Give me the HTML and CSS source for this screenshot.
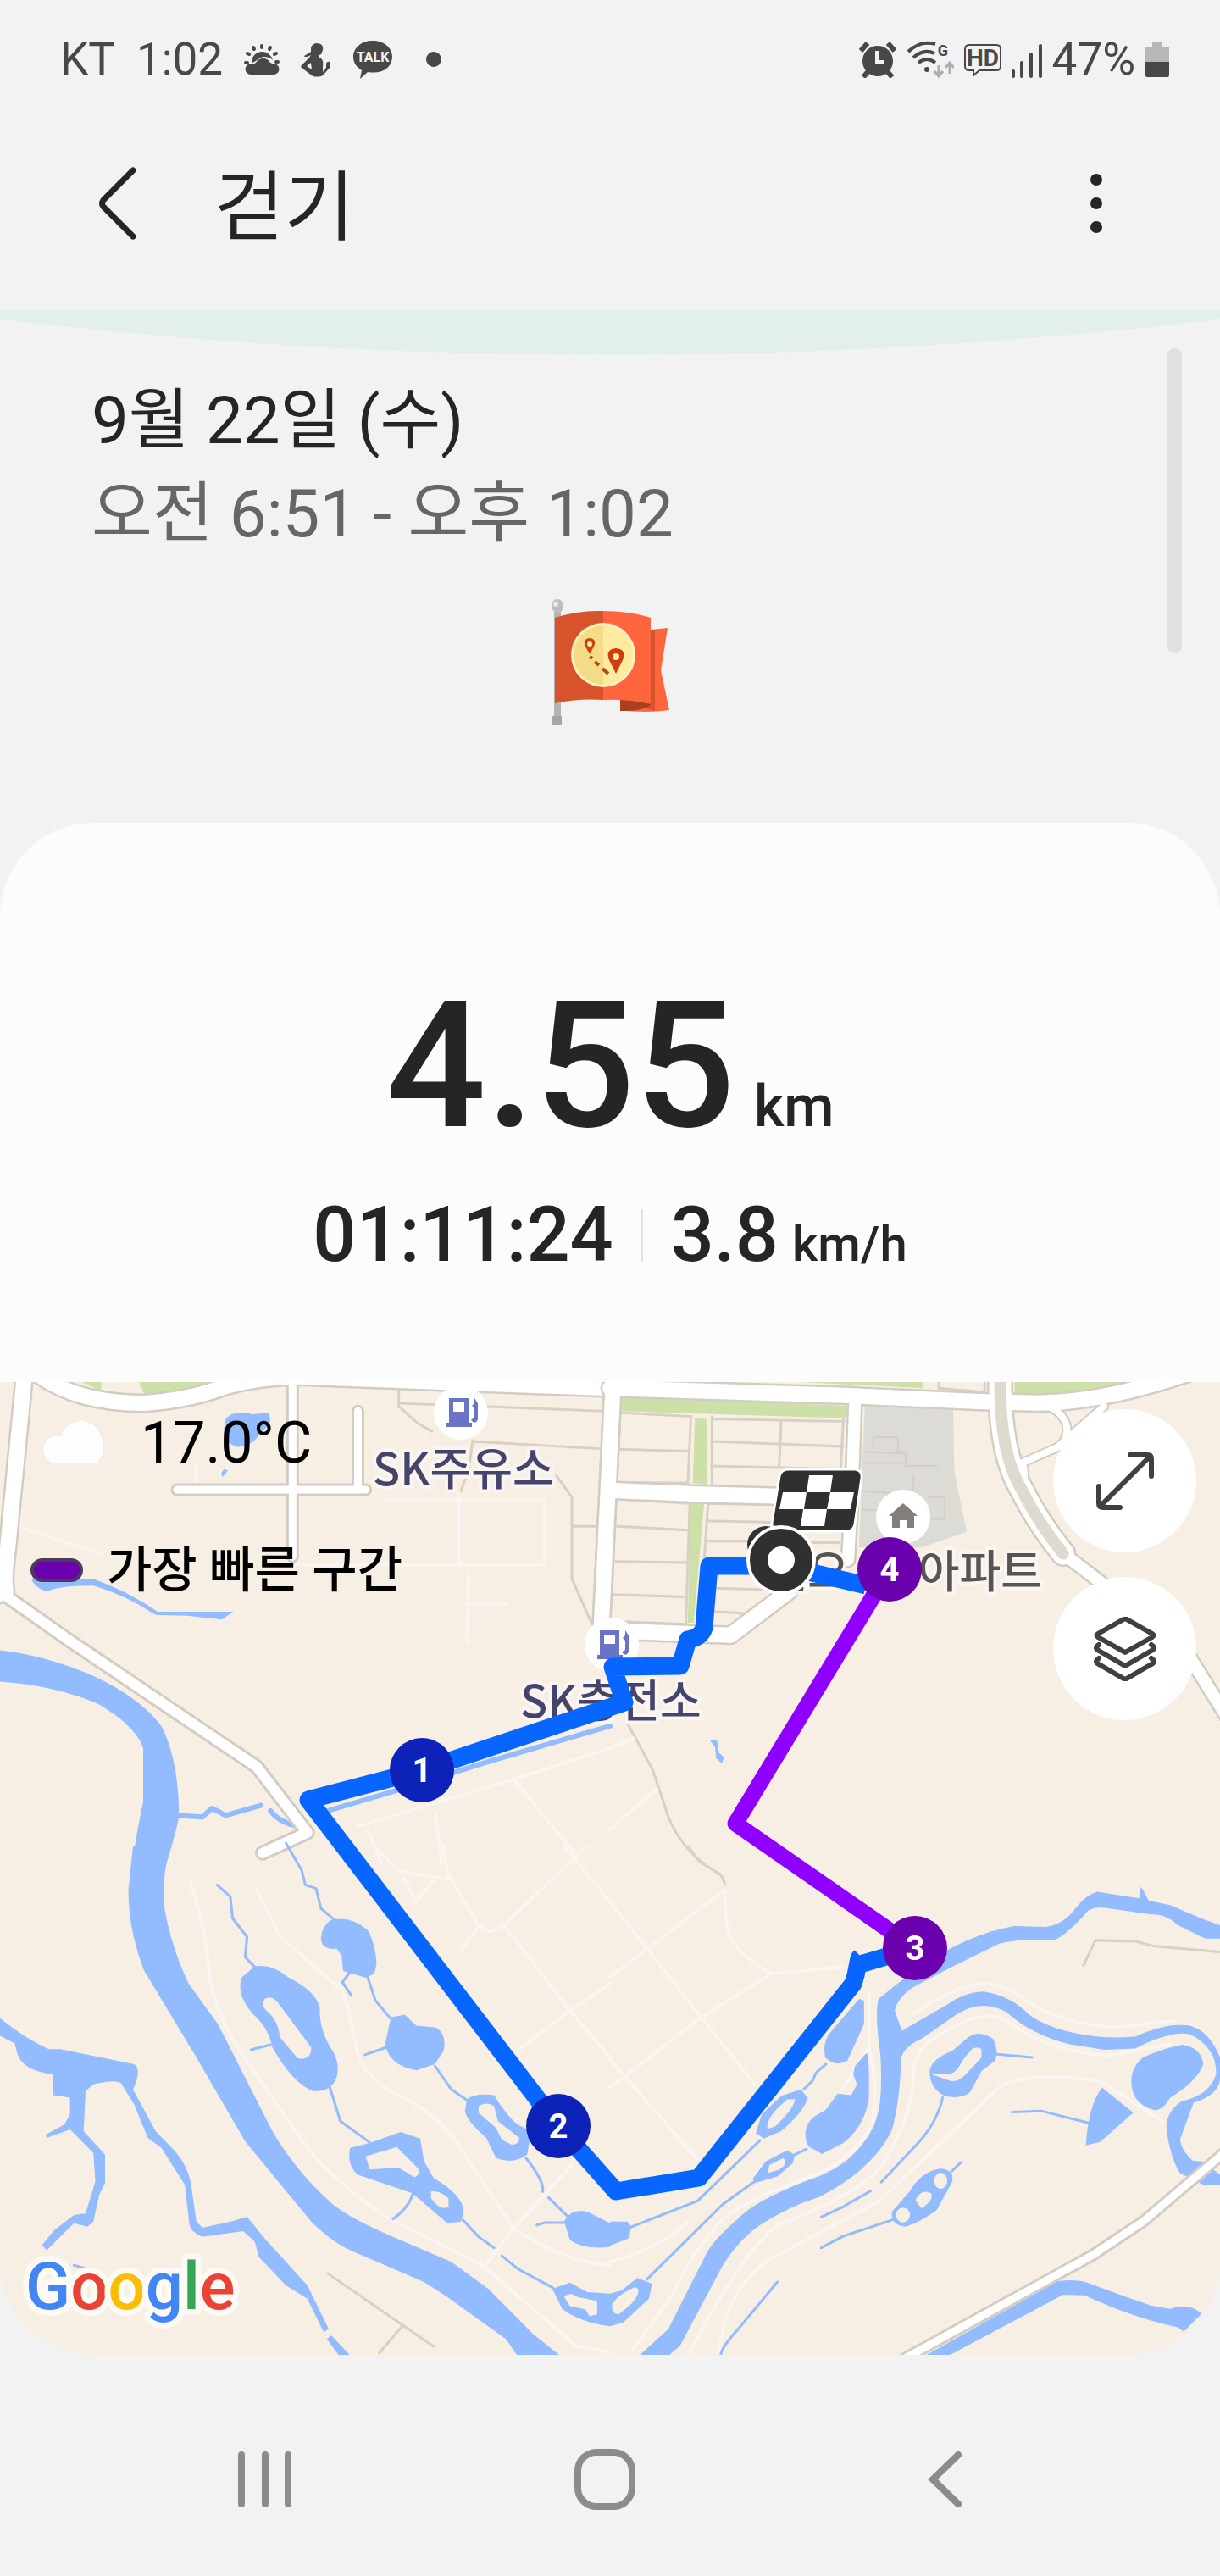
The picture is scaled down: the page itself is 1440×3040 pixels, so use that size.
FILE: index.html
```html
<!doctype html>
<html lang="ko">
    <head>
        <meta charset="utf-8">
        <meta name="viewport" content="width=device-width, initial-scale=1">
        <title>걷기</title>
        <link rel="stylesheet" href="styles.css">
    </head>
    <body>
        <div class="statusbar">
            <div class="status-left">
                <span>KT</span>
                <span>1:02</span>
                <svg class="status-icon" width="42" height="44" viewBox="0 0 42 44">
                    <g stroke="#484848" stroke-width="4" stroke-linecap="round">
                        <path d="M21 6v2M11 8l1 2M31 8l-1 2M4 15l2 1M38 15l-2 1M2 26h2M38 25h2" />
                    </g>
                    <path d="M9 26c0-8 6-13 12-13 7 0 12 5 13 10-3-3-7-4-10-4-6 0-9 6-15 7z" />
                    <path d="M8 40a6 6 0 0 1 0-13c3 0 5 0 6-1 4-7 14-6 17 0 2 1 3 1 4 1a6 6 0 0 1 0 13z" />
                </svg>
                <svg class="status-icon" width="36" height="44" viewBox="0 0 36 44">
                    <path d="M19 3c6 0 8 4 7 8l-2 5-2 1v3c4 1 5 6 4 11v6l4-5v-5c1-3 5-3 5 0v4L26 41c-4 2-10 2-13 0L1 32c-1-1-1-2 0-3l9-9 2-3C7 20 4 19 4 18l8-5V8c1-3 4-5 7-5zM7 30l6 4-1-8z" />
                </svg>
                <svg class="status-icon talk" width="48" height="50" viewBox="0 0 48 50">
                    <path d="M24 3C11 3 1 11 1 22c0 8 5 13 10 16L9 48l9-8c18 3 29-6 29-18C47 11 37 3 24 3z" />
                    <text x="24" y="28">TALK</text>
                </svg>
                <i class="more-dot"></i>
            </div>
            <div class="status-right">
                <svg class="status-icon" width="44" height="44" viewBox="0 0 44 44">
                    <circle cx="22" cy="24" r="18" />
                    <path d="M2 12L10 3M42 12L34 3" stroke="#484848" stroke-width="6" />
                    <path d="M5 43l6-7M39 43l-6-7" stroke="#484848" stroke-width="6" />
                    <path d="M21 12v13h9" fill="none" stroke="#f2f2f2" stroke-width="4" />
                </svg>
                <svg class="status-icon wifi" width="56" height="46" viewBox="0 0 56 46">
                    <g fill="none" stroke="#484848" stroke-width="4">
                        <path d="M2 14Q16 0 34 5M8 21Q20 10 33 16M14 27Q24 19 34 27" />
                    </g>
                    <circle cx="24" cy="35" r="3" />
                    <path d="M38 30v12m-5-5l5 6 5-6M51 40V28m-5 5l5-6 5 6" fill="none" stroke="#adadad" stroke-width="3" />
                    <text x="43" y="19">G</text>
                </svg>
                <svg class="status-icon hd" width="44" height="44" viewBox="0 0 44 44">
                    <path d="M6 5h32q5 0 5 5v20q0 5-5 5H18l-7 6v-6H6q-5 0-5-5V10q0-5 5-5z" fill="none" stroke="#484848" stroke-width="2" />
                    <text x="22" y="30">HD</text>
                </svg>
                <svg class="status-icon" width="36" height="44" viewBox="0 0 36 44">
                    <path d="M2 36v6M12 26v16M23 16v26M34 6v36" stroke="#484848" stroke-width="4" stroke-linecap="round" />
                </svg>
                <span>47%</span>
                <svg class="status-icon" width="28" height="44" viewBox="0 0 28 44">
                    <path d="M8 1h12v6h8v18H0V7h8z" fill="#b8b8b8" />
                    <path d="M0 25h28v16q0 2-2 2H2q-2 0-2-2z" />
                </svg>
            </div>
        </div>

        <header class="header">
            <button class="icon-button" aria-label="뒤로">
                <svg width="48" height="88" viewBox="0 0 48 88">
                    <path d="M42 5L7 40q-3 4 0 8l35 35" fill="none" stroke="#252525" stroke-width="7" stroke-linecap="round" />
                </svg>
            </button>
            <h1>걷기</h1>
            <button class="icon-button" aria-label="더보기">
                <svg width="48" height="88" viewBox="0 0 48 88" fill="#252525">
                    <circle cx="24" cy="16" r="7" />
                    <circle cx="24" cy="44" r="7" />
                    <circle cx="24" cy="72" r="7" />
                </svg>
            </button>
        </header>

        <main>
            <section class="summary">
                <svg class="arc" viewBox="0 0 1440 54" preserveAspectRatio="none">
                    <path d="M0 0H1440V11Q720 95 0 11z" fill="#e3f0e9" />
                </svg>
                <div class="scrollbar"></div>
                <p class="date">9월 22일 (수)</p>
                <p class="time">오전 6:51 - 오후 1:02</p>
                <svg class="flag" width="140" height="148" viewBox="0 0 140 148">
                    <path d="M4 12h8v130H4z" fill="#b3b3b3" />
                    <path d="M2 138h11v10H2z" fill="#a6a6a6" />
                    <ellipse cx="8" cy="8" rx="7" ry="8" fill="#bdbdbd" />
                    <circle cx="6" cy="6" r="3" fill="#e8e8e8" />
                    <path d="M82 120q18 12 36 2l1-86 19-2-8 50 10 47q-28 4-58 0z" fill="#ff653c" />
                    <path d="M118 36h5v96l-10-3z" fill="#d8532b" />
                    <path d="M82 117h36v8q-12 8-36 7z" fill="#a83f1e" />
                    <path d="M5 22q28-9 57-8v105q-30-2-57 4z" fill="#d8532b" />
                    <path d="M62 14q30 0 56 8v102q-26-6-56-5z" fill="#ff653c" />
                    <circle cx="62" cy="66" r="38" fill="#fff1c4" />
                    <path d="M62 31a35 35 0 0 0 0 70z" fill="#f3dc85" />
                    <path d="M62 31a35 35 0 0 1 0 70z" fill="#fdeba0" />
                    <path d="M46 65l-5-9q-4-9 5-10 9 1 5 10zM77 88l-8-16q-5-13 8-14 13 1 8 14z" fill="#cf3d10" />
                    <circle cx="46" cy="53" r="3" fill="#fdeba0" />
                    <circle cx="77" cy="68" r="4" fill="#fdeba0" />
                    <path d="M46 68l3 2M52 74l5 4M61 82l7 6" stroke="#b5451c" stroke-width="4" />
                </svg>
            </section>

            <section class="result">
                <p class="distance"><span>4.55</span><small>km</small></p>
                <div class="pace">
                    <span>01:11:24</span>
                    <i class="divider"></i>
                    <span class="speed"><span>3.8</span><small>km/h</small></span>
                </div>
            </section>

            <section class="map">
                <svg class="map-image" viewBox="0 0 1440 1148">
                    <g class="tile" transform="translate(0 -12) scale(.4592 .3699)">
                        <path class="park" d="M200 25H260V62zM355 25H560Q460 70 370 70z" />
                        <path class="trail" d="M1180 400V620M990 410H1400V615H760M1205 640L1200 860M60 500L260 580M920 1450L1320 1300L1568 1200M1320 1300L1480 1540M945 1460L980 1568M1120 1410L1135 1568M505 290V370M60 330L50 500M560 390H740V480M1200 740H1300" />
                        <path class="lane" d="M1025 50V110L1070 160L1110 190M1030 100L1545 125M1215 222L1540 245M1430 330L1470 400V660L1520 800M1475 493H1530M1215 220L1205 310L1185 380" />
                        <path class="water" d="M580 150Q600 120 650 135L690 130Q705 170 670 190Q655 235 610 240Q575 225 575 190zM568 325l8-15 10 5-14 20zM80 660L240 660Q330 700 405 765L500 765L600 765L570 790L480 778L400 775Q320 710 240 682Q160 680 120 700Q90 690 80 660z" />
                        <path class="water" d="M0 888Q120 905 240 970Q360 1040 415 1130Q460 1240 460 1420Q450 1480 425 1580H338Q350 1480 368 1370L368 1200Q350 1130 250 1058Q140 1000 0 988z" />
                        <path class="stream wide" d="M455 1415L520 1420L545 1392L580 1415L670 1383M695 1400Q720 1440 770 1450M815 1410L1020 1335L1250 1245L1568 1130" />
                        <g class="casing">
                            <path class="w18" d="M62 20L20 560Q8 660 15 700L-20 720" />
                            <path class="w12" d="M10 710L170 850L660 1260L790 1470L675 1535" />
                            <path class="w18" d="M100 10Q200 100 370 100Q480 90 560 55Q640 20 760 15L1568 52" />
                            <path class="w10" d="M752 20V590M455 376H940M920 125V376" />
                            <path class="w18" d="M1575 60L1562 400L1545 830" />
                        </g>
                        <g class="road">
                            <path class="w18" d="M62 20L20 560Q8 660 15 700L-20 720" />
                            <path class="w12" d="M10 710L170 850L660 1260L790 1470L675 1535" />
                            <path class="w18" d="M100 10Q200 100 370 100Q480 90 560 55Q640 20 760 15L1568 52" />
                            <path class="w10" d="M752 20V590M455 376H940M920 125V376" />
                            <path class="w18" d="M1575 60L1562 400L1545 830" />
                        </g>
                    </g>
                    <g class="tile" transform="translate(720 -12) scale(.4592 .3699)">
                        <path class="park" d="M22 75L606 108V148L22 125zM218 148L250 150L248 360L213 355zM207 418H242L215 800H200zM370 25H806V52zM1040 25H1350Q1240 75 1130 72L1040 70z" />
                        <path class="estate" d="M655 105L882 122L885 320L917 510L800 560L640 560z" />
                        <path class="lane" d="M22 130L208 142L200 355L12 352M22 247L205 253M262 142V360M600 150L590 372M262 150L600 158M260 222L600 238M440 155L435 300M260 300L600 310M12 405L205 420L195 805L0 795M10 492L200 505M5 605L198 608M0 710L195 718M252 420L420 424M250 475L420 480M248 540H360M275 690L400 695M272 765L340 770M252 420L240 640M500 545H590M845 25V52L963 65V25M40 1110L110 1270L150 1420Q180 1510 240 1568" />
                        <path class="lane faded" d="M675 245L680 208H740V255H760V300H840M655 255L755 260M650 290H760M780 330V380M820 400H860V470H820M650 380L760 390M650 440H720" />
                        <path class="trail" d="M0 1460L120 1330M0 1200L60 1170" />
                        <path class="water" d="M257 1175h18l5 40 14 15-7 18-14-15-3-35z" />
                        <g class="casing">
                            <path class="w18" d="M7 60L-6 400L-23 830M30 827L310 840L460 700" />
                            <path class="w18" d="M0 52L600 75L960 95L1060 98Q1250 110 1520 -10M0 378L230 390L600 402" />
                            <path class="w14" d="M630 90L622 380L612 600M1170 585Q1230 640 1290 700L1480 890L1590 1110" />
                            <path class="w8" d="M1130 110Q1200 160 1160 235L1060 290Q1070 340 1060 340M1150 240L1270 110" />
                            <path class="w26" d="M1003 20Q1000 260 1060 380Q1100 480 1165 580" />
                        </g>
                        <g class="road">
                            <path class="w18" d="M7 60L-6 400L-23 830M30 827L310 840L460 700" />
                            <path class="w18" d="M0 52L600 75L960 95L1060 98Q1250 110 1520 -10M0 378L230 390L600 402" />
                            <path class="w14" d="M630 90L622 380L612 600M1170 585Q1230 640 1290 700L1480 890L1590 1110" />
                            <path class="w8" d="M1130 110Q1200 160 1160 235L1060 290Q1070 340 1060 340M1150 240L1270 110" />
                            <path class="w26" d="M1003 20Q1000 260 1060 380Q1100 480 1165 580" />
                        </g>
                        <path class="highway" d="M1003 20Q1000 260 1060 380Q1100 480 1165 580" />
                    </g>
                    <g class="tile" transform="translate(0 548) scale(.4592 .3954)">
                        <path class="trail" d="M490 110Q530 250 540 400Q560 520 640 650L760 850Q830 980 1000 1110L1240 1250L1480 1490L1568 1510M660 130L720 270L880 430Q900 500 920 620Q940 700 1040 750Q1150 820 1200 930L1320 1140Q1450 1240 1568 1250M1240 1260L1320 1140L1470 950M960 0L1030 75L1155 98M1030 75L1068 165L1115 100M1140 0L1150 80L1230 235L1260 255L1295 235L1475 35L1510 0M1450 0L1568 165M1295 235L1465 490L1568 630M1465 490L1330 610M1465 490L1568 410M1230 240L1185 310" />
                        <path class="lane" d="M843 1275L1115 1493M1035 1430L975 1512" />
                        <path class="water" d="M342 0H437Q415 100 422 180Q440 300 485 410L560 530L700 850Q760 970 855 1068Q900 1110 1000 1160L1160 1240L1255 1320L1370 1455L1440 1520H1330L1300 1470L1150 1345L1090 1300L920 1215Q860 1190 800 1120L630 880L500 620L370 370Q330 250 330 130z" />
                        <path class="water" d="M0 512Q60 570 125 605L155 605L345 650Q365 665 342 725L400 850L450 910Q480 950 490 1000L505 1120L520 1138L600 1118L635 1105L680 1170L790 1310L845 1440L832 1450L790 1350L735 1310L665 1225L655 1180L625 1148L520 1165Q490 1150 487 1130L475 1010L415 900L380 870L345 770L310 705Q290 695 240 710L220 730L215 850L270 920V1005L255 1040L240 1120L225 1135L190 1125L120 1205L108 1190L140 1145L190 1100L220 1095L245 1000L240 915L180 845L120 870L118 860L165 830L180 800V750L137 742V680Q60 670 45 620L38 588L0 565zM852 1460L905 1525H875L840 1470z" />
                        <path class="water" d="M850 220Q900 205 945 250Q965 290 968 350L962 380L940 392L882 372L878 325L865 305Q830 310 825 280Q825 240 850 220zM655 358Q700 350 740 390Q810 430 822 480Q820 550 855 610Q875 650 865 690Q850 735 805 730Q755 710 700 600Q690 540 650 500Q605 440 622 390zM680 455Q700 440 720 475L800 600Q800 640 765 632L720 570Q715 520 690 495Q670 480 680 455z" />
                        <path class="water" d="M1005 510L1040 502L1070 535L1120 540Q1150 560 1140 610L1118 650L1070 668Q1000 655 990 590zM1200 755Q1220 735 1270 742Q1300 800 1330 830L1365 850L1355 920Q1320 950 1275 930L1250 870Q1200 820 1195 790zM1230 775q20-15 40 0l10 45 55 50q0 20-20 20l-25-15-15-35-45-45z" />
                        <path class="water" d="M900 900L950 885L1030 852L1080 872L1090 940L1115 990Q1190 1040 1192 1090L1185 1120L1150 1125L1060 1035L920 980Q890 950 900 900zM940 925l80-28 55 65q5 20-10 25l-40-28-75 5zM1108 1030q20-5 45 20v25q-20 15-45-25z" />
                        <path class="water" d="M1450 1120Q1465 1080 1510 1090L1568 1125V1195Q1500 1205 1465 1175zM1420 1320L1465 1302L1510 1330L1568 1335V1432Q1490 1420 1445 1380zM1450 1345q15-18 35 0l50 12v40l-20 5-10-20-40-10z" />
                        <path class="stream" d="M558 115L592 150L598 215L635 270L630 330L655 360M735 -10L775 70L785 115L812 125L825 185L860 220M900 375L880 405L903 445M945 390L965 460L1003 512M645 607L695 592M938 622L992 600M1118 655L1160 725L1200 757M848 720L875 820L950 883M1062 1035Q1050 1080 1010 1112M1190 1115L1230 1165L1270 1198M1290 1222L1330 1260L1422 1318M1352 930Q1400 1000 1395 1030M1410 1048L1458 1103M1380 1130L1400 1123H1450M190 1250L235 1265" />
                    </g>
                    <g class="tile" transform="translate(720 548) scale(.4592 .3954)">
                        <path class="trail" d="M0 165L235 510L375 715M0 390L295 130L300 240Q310 310 415 380L600 360M415 380L235 510L0 720M0 635L225 935M665 440V600Q690 700 675 830Q620 950 480 1000Q300 1080 270 1140Q200 1230 160 1340L60 1500M780 500Q900 410 960 410Q1020 410 1080 470Q1170 530 1300 540L1450 520M780 680Q780 600 850 560Q960 480 1020 520Q1120 610 1280 625L1440 590M780 680Q780 800 700 950Q640 1040 430 1130Q340 1210 205 1510M280 1510Q300 1300 430 1220L690 1060L1000 720Q1060 670 1260 700L1420 820M0 1240Q130 1200 200 1120M600 720L665 600" />
                        <path class="lane" d="M200 0L230 45L285 85L295 110M1217 355L1248 280L1350 283L1400 298L1568 315" />
                        <path class="water" d="M1568 235L1520 215L1440 175L1385 162L1365 120L1360 155L1252 135Q1220 145 1190 195Q1160 235 1120 240L1040 238Q950 255 850 320L760 390L690 455Q680 500 695 620Q700 720 692 780Q680 860 620 925Q580 970 500 1000Q370 1060 330 1110Q270 1170 250 1210L150 1440L75 1520H150L180 1490L290 1250Q340 1160 400 1120Q460 1075 540 1045Q680 960 725 845Q745 760 748 640Q750 600 800 575L880 510Q950 450 1020 495Q1080 560 1180 590L1270 607L1350 603Q1440 550 1490 560Q1560 600 1558 680Q1540 745 1470 760Q1430 790 1430 840Q1440 930 1465 975L1525 1010H1568V980L1525 940L1498 938Q1470 910 1465 875L1500 765Q1568 740 1568 690V630Q1540 550 1490 535Q1430 525 1350 568Q1270 575 1200 558Q1120 540 1075 500Q1030 445 960 433Q910 435 870 470L750 550L732 490Q740 450 780 420L870 365L1000 290Q1050 275 1140 280Q1170 270 1230 190Q1250 180 1270 183L1390 203Q1430 200 1460 235L1530 275H1568z" />
                        <path class="water" d="M1370 630Q1430 600 1470 592Q1520 600 1525 650Q1510 700 1440 750Q1420 790 1400 787Q1340 770 1340 700Q1340 660 1370 630zM1265 720L1345 795L1260 882L1223 892Q1230 770 1265 720zM640 455L653 460V530L610 640Q580 660 553 630Q545 580 570 550z" />
                        <path class="water" d="M920 570Q950 545 985 575Q1000 610 990 640L955 670L925 735Q900 755 860 745Q820 720 822 670Q825 635 880 610zM930 605q15-10 25 0v25l-40 50q-20 25-40 20l-50-20 50 0q20-10 30-40z" />
                        <path class="water" d="M660 615Q668 640 665 760Q650 840 600 885L545 918L510 895Q490 850 520 810L555 785L585 738L620 742L635 710L625 680L630 655zM440 745L490 725L508 750Q500 790 440 850L395 872L375 855L390 800zM455 755h20q0 25-50 80l-20 8q-5-20 20-55zM400 940L455 907L475 920L470 945L430 985L370 1005L368 990zM410 950l35-20q15 15-10 35l-30 10z" />
                        <path class="water" d="M770 1030Q800 970 850 962Q885 965 880 1000L840 1085Q800 1120 760 1135Q720 1130 725 1090zM833 998a17 24 0 1 0 34 0a17 24 0 1 0-34 0zM785 1055q15-35 40-20q10 20-25 45zM735 1100a18 22 0 1 0 36 0a18 22 0 1 0-36 0z" />
                        <path class="water" d="M0 1120H45L55 1135L48 1170L0 1192zM0 1335L30 1325L70 1288L108 1305L100 1350L35 1420L0 1432zM5 1370q10-30 60-55q20 10-10 50l-30 30q-20 5-20-25z" />
                        <path class="water" d="M810 1520L1150 1298Q1200 1290 1230 1303Q1290 1330 1390 1370L1440 1380Q1490 1360 1520 1395L1475 1448L1460 1435Q1350 1410 1220 1340L1165 1338L870 1520z" />
                        <path class="stream" d="M555 650L530 675L520 700L498 725M505 903L475 920M385 878L225 1058L50 1138M368 1003L290 1068L95 1292M855 750Q840 830 780 900L697 1002M995 620L1085 630M1033 793L1110 790L1230 825M670 1028L600 1075L543 1106M725 1115L600 1163L543 1198M878 970L903 942M430 1300L330 1440Q290 1490 285 1515" />
                        <path class="casing w10" d="M755 1530L1240 1220L1370 1120L1578 915" />
                        <path class="road w10" d="M755 1530L1240 1220L1370 1120L1578 915" />
                    </g>

                    <g class="place">
                        <circle cx="544" cy="36" r="32" />
                        <path class="fuel" d="M530 19h23v29h4v5h-30v-5h3zM535 24v11h13V24zM560 19l4 6v19q-3 7-8 1l2-2 2-1V31l-3-3 3-3z" />
                        <text x="440" y="122">SK주유소</text>
                        <circle cx="722" cy="310" r="32" />
                        <path class="fuel" transform="translate(178 274)" d="M530 19h23v29h4v5h-30v-5h3zM535 24v11h13V24zM560 19l4 6v19q-3 7-8 1l2-2 2-1V31l-3-3 3-3z" />
                        <text x="614" y="396">SK충전소</text>
                        <circle cx="1066" cy="159" r="32" />
                        <path fill="#857d79" d="M1066 143l17 15h-4v14h-9v-9h-8v9h-9v-14h-4z" />
                        <text class="home" x="1002" y="243">신오</text>
                        <text class="home" x="1230" y="243">아파트</text>
                    </g>

                    <circle cx="904" cy="192" r="22" fill="#303030" />
                    <path class="route" d="M1022 240L963 226L922 217H837L831 290Q827 302 812 304L803 335L723 336L737 378L498 458L364 493L659 878L727 955L825 939L1007 710L1010 700L1014 680L1016 678M1012 688L1080 668" />
                    <path class="route fast" d="M1050 221L868 521L1080 668" />

                    <g class="start">
                        <path d="M930 103h79q9 1 8 10l-8 55q-2 8-10 8h-80q-9-1-8-10l9-55q2-8 10-8z" fill="#303030" stroke="#fff" stroke-width="3" />
                        <path d="M955 110h28l-3 20h28l-4 20h-28l-3 20h-28l3-20h-28l4-20h28z" fill="#fff" />
                        <path d="M952 130h28l-4 20h-27z" fill="#303030" />
                        <circle cx="922" cy="210" r="39" fill="#303030" stroke="#fff" stroke-width="4" />
                        <circle cx="922" cy="210" r="16" fill="#fff" />
                    </g>
                    <g class="pin">
                        <circle cx="498" cy="458" r="38" />
                        <text x="498" y="472">1</text>
                        <circle cx="659" cy="878" r="38" />
                        <text x="659" y="892">2</text>
                    </g>
                    <g class="pin fast">
                        <circle cx="1080" cy="668" r="38" />
                        <text x="1080" y="682">3</text>
                        <circle cx="1050" cy="221" r="38" />
                        <text x="1050" y="235">4</text>
                    </g>
                    <text class="google" x="30" y="1094"><tspan fill="#4285f4">G</tspan><tspan fill="#ea4335">o</tspan><tspan fill="#fbbc05">o</tspan><tspan fill="#4285f4">g</tspan><tspan fill="#34a853">l</tspan><tspan fill="#ea4335">e</tspan></text>
                </svg>

                <div class="map-info">
                    <p class="weather">
                        <svg width="76" height="52" viewBox="0 0 76 52">
                            <path d="M18 51a16 17 0 1 1 6-33C28-4 58-6 68 10c12 18 6 38-6 41z" fill="#fdfdfd" stroke="#ece6df" />
                        </svg>
                        17.0°C
                    </p>
                    <p class="legend"><i class="pill"></i>가장 빠른 구간</p>
                </div>
                <div class="map-buttons">
                    <button class="round-button" aria-label="확대">
                        <svg width="76" height="76" viewBox="0 0 76 76">
                            <path d="M8 68L68 8M44 7h20q5 0 5 5v20M7 44v20q0 5 5 5h20" />
                        </svg>
                    </button>
                    <button class="round-button" aria-label="레이어">
                        <svg width="76" height="76" viewBox="0 0 76 76">
                            <path d="M38 2L70 20q3 2 0 4L38 42 6 24q-3-2 0-4z" />
                            <path d="M7 33q-6 4 0 7l31 18 31-18q6-3 0-7M7 49q-6 4 0 7l31 18 31-18q6-3 0-7" />
                        </svg>
                    </button>
                </div>
            </section>
        </main>

        <nav class="navbar">
            <button class="icon-button" aria-label="최근 앱">
                <svg width="72" height="72" viewBox="0 0 72 72">
                    <path d="M8 7v58M36 7v58M63 7v58" />
                </svg>
            </button>
            <button class="icon-button" aria-label="홈">
                <svg width="72" height="72" viewBox="0 0 72 72">
                    <rect x="4" y="4" width="64" height="64" rx="22" />
                </svg>
            </button>
            <button class="icon-button" aria-label="이전">
                <svg width="72" height="72" viewBox="0 0 72 72">
                    <path d="M52 7L22 36l30 29" />
                </svg>
            </button>
        </nav>
    </body>
</html>
```
FILE: styles.css
```css
* {
    box-sizing: border-box;
}
body {
    margin: 0;
    background: #f2f2f2;
    color: #252525;
    font-family: Roboto, "Noto Sans CJK KR", sans-serif;
}
h1,
p {
    margin: 0;
    font-weight: 400;
}
svg {
    display: block;
}
button {
    padding: 0;
    border: 0;
    background: none;
}

.statusbar {
    display: flex;
    justify-content: space-between;
    align-items: center;
    height: 140px;
    padding: 0 60px 0 71px;
    color: #484848;
    font-size: 53px;
}
.status-left,
.status-right {
    display: flex;
    align-items: center;
}
.status-left {
    gap: 25px;
}
.status-right {
    gap: 12px;
}
.status-icon {
    fill: #484848;
}
.status-icon text {
    font-weight: 700;
    text-anchor: middle;
}
.talk text {
    fill: #f2f2f2;
    font-size: 16px;
}
.wifi text {
    font-size: 18px;
}
.hd text {
    font-size: 28px;
}
.more-dot {
    width: 18px;
    height: 18px;
    margin-left: 14px;
    border-radius: 50%;
    background: #484848;
}

.header {
    display: flex;
    align-items: center;
    height: 200px;
    margin-bottom: 26px;
    padding: 0 122px 0 115px;
}
.header h1 {
    flex: 1;
    margin-left: 90px;
    padding-top: 12px;
    font-size: 90px;
    line-height: 110px;
}

.summary {
    position: relative;
    padding-bottom: 116px;
}
.arc {
    width: 100%;
    height: 54px;
}
.scrollbar {
    position: absolute;
    top: 45px;
    right: 45px;
    width: 17px;
    height: 360px;
    border-radius: 9px;
    background: #e0e0e0;
}
.date,
.time {
    padding-left: 108px;
    font-size: 78px;
    line-height: 110px;
}
.date {
    margin-top: 22px;
}
.time {
    color: #666;
}
.flag {
    margin: 45px auto 0;
}

.result {
    padding: 187px 0 118px;
    border-radius: 110px 110px 0 0;
    background: #fcfcfc;
    font-weight: 500;
}
.result small {
    line-height: 1;
}
.distance,
.speed {
    display: flex;
    align-items: baseline;
}
.distance {
    justify-content: center;
    gap: 22px;
    font-size: 208px;
    font-weight: 500;
    line-height: 200px;
}
.distance small {
    font-size: 68px;
}
.pace {
    display: flex;
    justify-content: center;
    align-items: center;
    gap: 33px;
    margin-top: 45px;
    font-size: 90px;
    line-height: 110px;
}
.speed {
    gap: 16px;
}
.pace small {
    font-size: 58px;
}
.divider {
    width: 2px;
    height: 62px;
    background: #e2e2e2;
}

.map {
    position: relative;
    overflow: hidden;
    border-radius: 0 0 110px 110px;
    background: #f7eee4;
}
.map-image {
    width: 100%;
    height: auto;
}
.tile path {
    vector-effect: non-scaling-stroke;
    stroke-linejoin: round;
    stroke-linecap: round;
}
.water {
    fill: #93bbff;
    fill-rule: evenodd;
}
.stream {
    fill: none;
    stroke: #93bbff;
    stroke-width: 3px;
}
.stream.wide {
    stroke-width: 6px;
}
.park {
    fill: #cde0a8;
}
.estate {
    fill: #dddbd6;
}
.trail,
.lane,
.casing,
.road,
.highway {
    fill: none;
}
.trail {
    stroke: #faf5f0;
    stroke-width: 4px;
}
.lane {
    stroke: #d8d0c6;
    stroke-width: 3px;
}
.lane.faded {
    stroke: #d4cec6;
    stroke-width: 2px;
}
.road {
    stroke: #fff;
}
.casing {
    stroke: #d3ccc2;
}
.highway {
    stroke: #dedad0;
    stroke-width: 14px;
}
.w8 {
    stroke-width: 8px;
}
.w10 {
    stroke-width: 9px;
}
.w12 {
    stroke-width: 12px;
}
.w14 {
    stroke-width: 14px;
}
.w18 {
    stroke-width: 18px;
}
.w26 {
    stroke-width: 26px;
}
.casing .w8 {
    stroke-width: 12px;
}
.casing .w10,
.casing.w10 {
    stroke-width: 15px;
}
.casing .w12 {
    stroke-width: 18px;
}
.casing .w14 {
    stroke-width: 19px;
}
.casing .w18 {
    stroke-width: 23px;
}
.casing .w26 {
    stroke-width: 31px;
}

.place circle {
    fill: #fff;
}
.place text {
    fill: #45456b;
    stroke: #fbf5f2;
    stroke-width: 8px;
    stroke-linejoin: round;
    paint-order: stroke;
    font-family: "Noto Sans CJK KR", sans-serif;
    font-size: 53px;
    font-weight: 500;
}
.place .home {
    fill: #555;
    text-anchor: end;
}
.fuel {
    fill: #6a74c6;
    fill-rule: evenodd;
}
.route {
    fill: none;
    stroke: #0766ff;
    stroke-width: 21px;
    stroke-linejoin: round;
}
.route.fast {
    stroke: #9000ff;
    stroke-width: 19px;
}
.pin {
    fill: #0c22b8;
}
.pin.fast {
    fill: #6a00ae;
}
.pin text {
    fill: #fff;
    font-size: 40px;
    font-weight: 700;
    text-anchor: middle;
}
.google {
    stroke: #fdf9f5;
    stroke-width: 14px;
    stroke-linejoin: round;
    paint-order: stroke;
    font-size: 78px;
    font-weight: 500;
}

.map-info {
    position: absolute;
    top: 30px;
    left: 36px;
    color: #000;
}
.weather,
.legend {
    display: flex;
    align-items: center;
}
.weather {
    gap: 42px;
    padding-left: 12px;
    font-size: 68px;
    line-height: 84px;
}
.legend {
    gap: 28px;
    margin-top: 66px;
    font-size: 58px;
    font-weight: 500;
    line-height: 84px;
}
.pill {
    width: 62px;
    height: 28px;
    border: 4px solid #4a3a5e;
    border-radius: 14px;
    background: #6a00ae;
}
.map-buttons {
    position: absolute;
    top: 32px;
    right: 28px;
    display: grid;
    gap: 29px;
}
.round-button {
    display: grid;
    place-items: center;
    width: 169px;
    height: 169px;
    border-radius: 50%;
    background: #fff;
}
.round-button path {
    fill: none;
    stroke: #404040;
    stroke-width: 6px;
    stroke-linecap: round;
    stroke-linejoin: round;
}

.navbar {
    display: grid;
    grid-template-columns: repeat(3, 1fr);
    justify-items: center;
    padding: 111px 124px 77px 112px;
}
.navbar svg {
    fill: none;
    stroke: #8c8c8c;
    stroke-width: 8px;
    stroke-linecap: round;
}
```
